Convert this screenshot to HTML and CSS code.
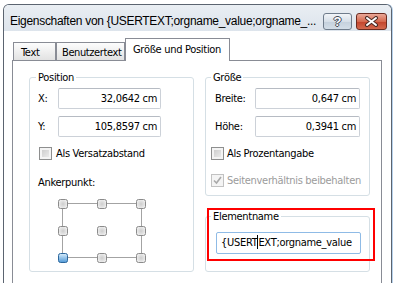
FILE: index.html
```html
<!DOCTYPE html>
<html lang="de">
<head>
	<meta charset="UTF-8">
	<title>Eigenschaften</title>
	<link rel="stylesheet" href="styles.css">
</head>
<body>
	<div class="window">
		<div class="titlebar">
			<span class="title">Eigenschaften von {USERTEXT;orgname_value;orgname_...</span>
			<div class="caption-buttons">
				<span class="cbtn help">?</span>
				<span class="cbtn close">
					<svg width="15" height="11" viewBox="0 0 15 11">
						<path d="M3 2 L12 9 M12 2 L3 9" stroke="#4a2a24" stroke-width="4" stroke-linecap="round"/>
						<path d="M3 2 L12 9 M12 2 L3 9" stroke="#fff" stroke-width="2" stroke-linecap="round"/>
					</svg>
				</span>
			</div>
		</div>

		<div class="dialog">
			<div class="tabs">
				<div class="tab tab-text">Text</div>
				<div class="tab tab-user">Benutzertext</div>
				<div class="tab active">Größe und Position</div>
			</div>

			<div class="panel">
				<!-- linke Spalte -->
				<div class="col">
					<fieldset class="group group-pos">
						<legend>Position</legend>
						<div class="field">
							<span class="label">X:</span>
							<div class="input">32,0642 cm</div>
						</div>
						<div class="field">
							<span class="label">Y:</span>
							<div class="input">105,8597 cm</div>
						</div>
						<div class="check"><span class="box"></span>Als Versatzabstand</div>
						<div class="anchor-label">Ankerpunkt:</div>
						<svg class="anchor" width="89" height="64" viewBox="0 0 89 64">
							<defs>
								<radialGradient id="knob" cx="50%" cy="50%" r="60%">
									<stop offset="0" stop-color="#cdcdcd"/>
									<stop offset="1" stop-color="#f4f4f4"/>
								</radialGradient>
								<linearGradient id="knobSel" x1="0" y1="0" x2="0" y2="1">
									<stop offset="0" stop-color="#d8edfb"/>
									<stop offset="1" stop-color="#4f98d6"/>
								</linearGradient>
							</defs>
							<rect x="4.5" y="4.5" width="79" height="54" fill="none" stroke="#a3a3a3"/>
							<g fill="url(#knob)" stroke="#8b8b8b">
								<rect x="0.5" y="0.5" width="9" height="9" rx="2"/>
								<rect x="39.5" y="0.5" width="9" height="9" rx="2"/>
								<rect x="78.5" y="0.5" width="9" height="9" rx="2"/>
								<rect x="0.5" y="27.5" width="9" height="9" rx="2"/>
								<rect x="39.5" y="27.5" width="9" height="9" rx="2"/>
								<rect x="78.5" y="27.5" width="9" height="9" rx="2"/>
								<rect x="39.5" y="54.5" width="9" height="9" rx="2"/>
								<rect x="78.5" y="54.5" width="9" height="9" rx="2"/>
							</g>
							<rect x="0.5" y="54.5" width="9" height="9" rx="2" fill="url(#knobSel)" stroke="#2c679d"/>
						</svg>
					</fieldset>
				</div>

				<!-- rechte Spalte -->
				<div class="col">
					<fieldset class="group group-size">
						<legend>Größe</legend>
						<div class="field">
							<span class="label">Breite:</span>
							<div class="input">0,647 cm</div>
						</div>
						<div class="field">
							<span class="label">Höhe:</span>
							<div class="input">0,3941 cm</div>
						</div>
						<div class="check"><span class="box"></span>Als Prozentangabe</div>
						<div class="check disabled">
							<span class="box">
								<svg width="11" height="11" viewBox="0 0 11 11">
									<path d="M2 5.5 L4.5 8 L9 2" fill="none" stroke="#a9a9a9" stroke-width="1.6"/>
								</svg>
							</span>Seitenverhältnis beibehalten
						</div>
					</fieldset>

					<div class="name-wrap">
						<fieldset class="group group-name">
							<legend>Elementname</legend>
							<div class="input name-input">{USERT<span class="caret"></span>EXT;orgname_value</div>
						</fieldset>
						<div class="highlight"></div>
					</div>
				</div>
			</div>
		</div>
	</div>
</body>
</html>
```

FILE: styles.css
```css
* {
	margin: 0;
	padding: 0;
}
body {
	background: #fff;
	font-family: "DejaVu Sans Condensed", "Liberation Sans", Arial, sans-serif;
	font-size: 11px;
	letter-spacing: -0.3px;
	color: #000;
	overflow: hidden;
}

/* Fenster */
.window {
	margin: 4px 0 0 3px;
	width: 389px;
	height: 279px;
	box-sizing: border-box;
	border: 1px solid #5b6470;
	border-bottom: none;
	border-radius: 6px 6px 0 0;
	background: #fff;
	box-shadow: 1px 0 0 #b9d3ec;
}
.titlebar {
	height: 26px;
	display: flex;
	justify-content: space-between;
	align-items: flex-start;
	background: linear-gradient(#e9eef3, #dde4ec);
	border-radius: 5px 5px 0 0;
}
.title {
	font-family: "Liberation Sans", Arial, sans-serif;
	font-size: 12px;
	letter-spacing: -0.3px;
	line-height: 14px;
	padding: 9px 0 0 6px;
	white-space: nowrap;
}
.caption-buttons {
	display: flex;
	gap: 4px;
	margin: 8px 4px 0 0;
}
.cbtn {
	height: 17px;
	box-sizing: border-box;
	border-radius: 3px;
	display: flex;
	align-items: center;
	justify-content: center;
}
.help {
	width: 29px;
	border: 1px solid #6f7c8b;
	background: linear-gradient(#f2f5f8, #d6dfe8 50%, #c4d0dc 51%, #d3dee8);
	color: #fff;
	font-family: "Liberation Sans", Arial, sans-serif;
	font-weight: bold;
	font-size: 13px;
	letter-spacing: 0;
	text-shadow: 1px 0 0 #3f4854, -1px 0 0 #3f4854, 0 1px 0 #3f4854, 0 -1px 0 #3f4854;
}
.close {
	width: 31px;
	border: 1px solid #6b2b20;
	background: linear-gradient(#eaa898, #d5694f 50%, #c2432b 51%, #d3694e);
}

/* Karteireiter */
.dialog {
	padding-top: 7px;
}
.tabs {
	display: flex;
	align-items: flex-end;
	height: 23px;
	margin: 0 0 -1px 9px;
	position: relative;
	z-index: 1;
}
.tab {
	box-sizing: border-box;
	height: 18px;
	margin-bottom: 1px;
	padding-top: 3px;
	line-height: 13px;
	border: 1px solid #898c95;
	border-bottom: none;
	background: linear-gradient(#fdfdfd, #e2e2e2);
	white-space: nowrap;
}
.tab-text {
	width: 43px;
	padding-left: 7px;
}
.tab-user {
	width: 69px;
	padding-left: 5px;
	letter-spacing: -0.4px;
}
.tab.active {
	width: 105px;
	height: 23px;
	margin-bottom: 0;
	padding: 4px 0 0 7px;
	background: #fff;
}

.panel {
	margin-left: 8px;
	width: 370px;
	height: 223px;
	box-sizing: border-box;
	border: 1px solid #898c95;
	border-bottom: none;
	background: #fff;
	padding: 10px 11px 0 16px;
	display: grid;
	grid-template-columns: 165px 165px;
	column-gap: 11px;
	align-items: start;
}

/* Gruppen */
.group {
	border: 1px solid #d5dfe5;
	border-radius: 3px;
	padding: 4px 8px 8px 8px;
	min-width: 0;
}
.group legend {
	padding: 0 2px;
	margin-left: -2px;
	line-height: 13px;
}
.group-size legend,
.group-name legend {
	margin-left: -3px;
}
.field {
	display: flex;
	align-items: center;
	height: 21px;
}
.field + .field {
	margin-top: 7px;
}
.label {
	width: 20px;
}
.group-size .label {
	width: 40px;
	padding-left: 1px;
}
.input {
	box-sizing: border-box;
	height: 21px;
	width: 103px;
	border: 1px solid #ccd1d8;
	border-top-color: #b6bbc3;
	border-radius: 2px;
	text-align: right;
	padding-right: 3px;
	line-height: 19px;
	white-space: nowrap;
	overflow: hidden;
}
.group-size .input {
	width: 105px;
}

.check {
	display: flex;
	align-items: center;
	gap: 4px;
	height: 13px;
	line-height: 13px;
	margin: 10px 0 0 1px;
	white-space: nowrap;
}
.group-size .check {
	margin-left: -3px;
	gap: 3px;
}
.group-size .check.disabled {
	margin-top: 14px;
	color: #9b9b9b;
}
.box {
	flex: none;
	box-sizing: border-box;
	width: 13px;
	height: 13px;
	border: 1px solid #8e8f8f;
	background: linear-gradient(135deg, #c6c6c6, #f2f2f2);
	box-shadow: inset 0 0 0 2px #f4f4f4;
	display: flex;
	align-items: center;
	justify-content: center;
}
.disabled .box {
	border-color: #c2c2c2;
	background: #f4f4f4;
	box-shadow: none;
}

.anchor-label {
	margin-top: 16px;
	line-height: 13px;
}
.anchor {
	display: block;
	margin: 10px 0 0 20px;
}

/* Elementname */
.name-wrap {
	position: relative;
	margin-top: 14px;
}
.group-name {
	padding: 9px 8px 17px 8px;
}
.name-input {
	width: 145px;
	height: 22px;
	margin-left: 2px;
	text-align: left;
	padding: 0 0 0 4px;
	line-height: 20px;
	border-color: #8fbbe6;
}
.caret {
	display: inline-block;
	width: 1px;
	height: 14px;
	background: #000;
	vertical-align: -3px;
}
.highlight {
	position: absolute;
	top: -2px;
	left: 2px;
	width: 168px;
	height: 53px;
	box-sizing: border-box;
	border: 2px solid #f00;
}
```
